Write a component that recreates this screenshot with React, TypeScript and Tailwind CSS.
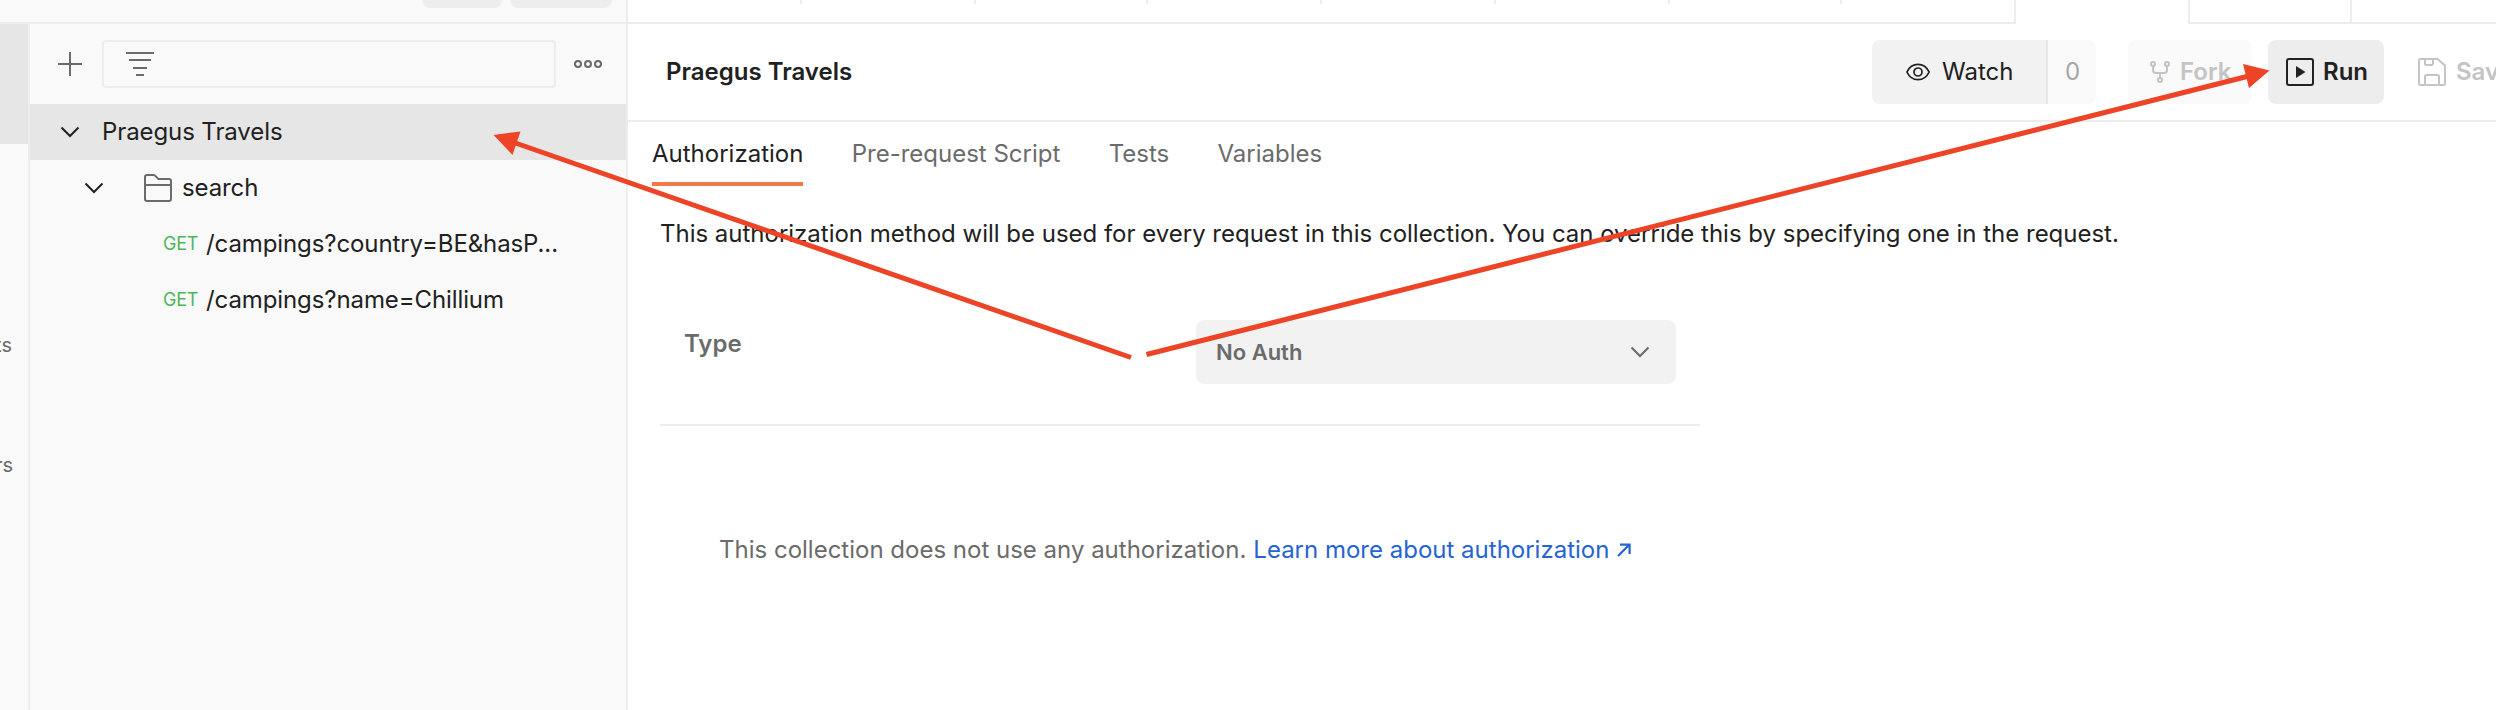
import React from "react";

function Chevron({ className = "" }: { className?: string }) {
  return (
    <svg width="20" height="12" viewBox="0 0 20 12" fill="none" stroke="currentColor" strokeWidth="2" className={`shrink-0 ${className}`}>
      <path d="M1.5 1.5 10 10l8.5-8.5" />
    </svg>
  );
}

function PlusIcon() {
  return (
    <svg width="24" height="24" viewBox="0 0 24 24" fill="none" stroke="#6b6b6b" strokeWidth="2" className="shrink-0">
      <path d="M12 0v24M0 12h24" />
    </svg>
  );
}

function FilterIcon() {
  return (
    <svg width="28" height="24" viewBox="0 0 28 24" fill="none" stroke="#6b6b6b" strokeWidth="2">
      <path d="M0 1h28M3 8h22M7 16h14M10 23h8" />
    </svg>
  );
}

function MoreIcon() {
  return (
    <svg width="28" height="8" viewBox="0 0 28 8" fill="none" stroke="#6b6b6b" strokeWidth="2" className="shrink-0">
      <circle cx="4" cy="4" r="3" />
      <circle cx="14" cy="4" r="3" />
      <circle cx="24" cy="4" r="3" />
    </svg>
  );
}

function FolderIcon() {
  return (
    <svg width="28" height="28" viewBox="0 0 28 28" fill="none" stroke="#6b6b6b" strokeWidth="2" className="shrink-0">
      <path d="M1 3a2 2 0 0 1 2-2h6.6a2 2 0 0 1 1.4.6L14.4 5H25a2 2 0 0 1 2 2v18a2 2 0 0 1-2 2H3a2 2 0 0 1-2-2ZM1 11h26" />
    </svg>
  );
}

function EyeIcon() {
  return (
    <svg width="24" height="18" viewBox="0 0 24 18" fill="none" stroke="#212121" strokeWidth="1.7" className="shrink-0">
      <path d="M.9 9C3.3 3.8 7.3 1.3 12 1.3S20.7 3.8 23.1 9C20.7 14.2 16.7 16.7 12 16.7S3.3 14.2.9 9Z" />
      <circle cx="12" cy="9" r="4" />
    </svg>
  );
}

function ForkIcon() {
  return (
    <svg width="20" height="22" viewBox="0 0 20 22" fill="none" stroke="#c4c4c4" strokeWidth="2" className="shrink-0">
      <circle cx="3" cy="3" r="2.1" />
      <circle cx="17" cy="3" r="2.1" />
      <circle cx="10" cy="19" r="2.1" />
      <path d="M3 5v4a3 3 0 0 0 3 3h8a3 3 0 0 0 3-3V5M10 12v5" />
    </svg>
  );
}

function RunIcon() {
  return (
    <svg width="28" height="28" viewBox="0 0 28 28" fill="none" className="shrink-0">
      <rect x="1" y="1" width="26" height="26" rx="2" stroke="#212121" strokeWidth="2" />
      <path d="M10 8v12l9.5-6Z" fill="#212121" />
    </svg>
  );
}

function SaveIcon() {
  return (
    <svg width="28" height="28" viewBox="0 0 28 28" fill="none" stroke="#c4c4c4" strokeWidth="2" className="shrink-0">
      <path d="M1 2.5A1.5 1.5 0 0 1 2.5 1H19.5L27 7.5v18a1.5 1.5 0 0 1-1.5 1.5h-23A1.5 1.5 0 0 1 1 25.5ZM7 1v4.5A1.500 1.500 0 0 0 8.5 7h5A1.5 1.5 0 0 0 15 5.5V1M7 27v-8.500A1.5 1.5 0 0 1 8.5 17h11a1.5 1.5 0 0 1 1.5 1.5V27" />
    </svg>
  );
}

function ExternalIcon() {
  return (
    <svg width="14" height="14" viewBox="0 0 14 14" fill="none" stroke="#2663d3" strokeWidth="2.2" className="shrink-0">
      <path d="M1 13 12 2M3 1.6h9.600v9.400" />
    </svg>
  );
}

function Sidebar() {
  return (
    <aside className="flex w-[628px] shrink-0 flex-col border-r-2 border-[#ededed] bg-[#f9f9f9]">
      <div className="flex h-6 justify-end gap-2 border-b-2 border-[#ededed] pr-3.5">
        <div className="h-2 w-20 rounded-b-lg bg-[#ededed]" />
        <div className="h-2 w-[102px] rounded-b-lg bg-[#ededed]" />
      </div>
      <div className="flex min-h-0 flex-1">
        <nav className="flex w-[30px] shrink-0 flex-col overflow-hidden border-r-2 border-[#ededed] text-[20px] leading-6 whitespace-nowrap text-[#6b6b6b]">
          <div className="h-[120px] bg-[#e6e6e6]" />
          <div className="mt-[189px] flex justify-end pr-4">Environments</div>
          <div className="mt-24 flex justify-end pr-[15px]">Mock Servers</div>
        </nav>
        <div className="flex min-w-0 flex-1 flex-col tracking-[-0.1px]">
          <div className="flex h-20 items-center pl-7">
            <PlusIcon />
            <div className="ml-5 flex h-12 w-[454px] items-center rounded border-2 border-[#ededed] pl-[22px]">
              <FilterIcon />
            </div>
            <div className="ml-[18px]">
              <MoreIcon />
            </div>
          </div>
          <div className="flex h-14 items-center bg-[#e6e6e6] pl-[30px]">
            <Chevron />
            <span className="ml-[22px]">Praegus Travels</span>
          </div>
          <div className="flex h-14 items-center pl-[54px]">
            <Chevron />
            <span className="ml-10 flex items-center gap-2.5">
              <FolderIcon />
              search
            </span>
          </div>
          <div className="flex h-14 items-center pl-[133px]">
            <span className="w-[43px] shrink-0 text-[18px] tracking-[-0.3px] text-[#4fb759]">GET</span>
            <span className="whitespace-nowrap">/campings?country=BE&amp;hasP...</span>
          </div>
          <div className="flex h-14 items-center pl-[133px]">
            <span className="w-[43px] shrink-0 text-[18px] tracking-[-0.3px] text-[#4fb759]">GET</span>
            <span className="whitespace-nowrap">/campings?name=Chillium</span>
          </div>
        </div>
      </div>
    </aside>
  );
}

function TabStrip() {
  return (
    <div className="flex h-6">
      <div className="flex w-[1388px] shrink-0 border-r-2 border-b-2 border-[#ededed]">
        <div className="h-1 w-[174px] border-r-2 border-[#ededed]" />
        <div className="h-1 w-[174px] border-r-2 border-[#ededed]" />
        <div className="h-1 w-[172px] border-r-2 border-[#ededed]" />
        <div className="h-1 w-[174px] border-r-2 border-[#ededed]" />
        <div className="h-1 w-[174px] border-r-2 border-[#ededed]" />
        <div className="h-1 w-[174px] border-r-2 border-[#ededed]" />
        <div className="h-1 w-[172px] border-r-2 border-[#ededed]" />
      </div>
      <div className="w-[172px] shrink-0" />
      <div className="w-[164px] shrink-0 border-x-2 border-b-2 border-[#ededed]" />
      <div className="flex-1 border-b-2 border-[#ededed]" />
    </div>
  );
}

function Header() {
  return (
    <header className="flex h-[98px] shrink-0 items-start justify-between overflow-hidden border-b-2 border-[#ededed] pt-4 pl-[38px]">
      <h1 className="flex h-16 items-center font-semibold">Praegus Travels</h1>
      <div className="flex w-[624px] shrink-0">
        <div className="flex h-16 w-[224px] shrink-0 overflow-hidden rounded-lg">
          <div className="flex w-44 items-center border-r-2 border-[#e6e6e6] bg-[#f2f2f2] pl-[34px]">
            <EyeIcon />
            <span className="ml-3">Watch</span>
          </div>
          <div className="flex flex-1 items-center justify-center bg-[#f9f9f9] pl-px text-[#a6a6a6]">0</div>
        </div>
        <div className="ml-8 flex h-16 w-[124px] shrink-0 items-center rounded-lg bg-[#fafafa] pl-[22px] font-semibold text-[#c4c4c4]">
          <ForkIcon />
          <span className="ml-2.5">Fork</span>
        </div>
        <div className="ml-4 flex h-16 w-[116px] shrink-0 items-center rounded-lg bg-[#ededed] pl-[18px] font-semibold">
          <RunIcon />
          <span className="ml-[9px]">Run</span>
        </div>
        <div className="ml-[34px] flex h-16 shrink-0 items-center font-semibold text-[#c4c4c4]">
          <SaveIcon />
          <span className="ml-2.5">Save</span>
        </div>
      </div>
    </header>
  );
}

function Tabs() {
  return (
    <div className="flex h-16 shrink-0 gap-[48.300px] pl-6 text-[#6b6b6b]">
      <div className="flex h-16 items-center border-b-4 border-[#f47748] pt-1 text-[#212121]">Authorization</div>
      <div className="flex h-[60px] items-center pt-1">Pre-request Script</div>
      <div className="flex h-[60px] items-center pt-1">Tests</div>
      <div className="flex h-[60px] items-center pt-1">Variables</div>
    </div>
  );
}

function Arrows() {
  return (
    <svg width="2496" height="710" viewBox="0 0 2496 710" fill="none" className="pointer-events-none absolute inset-0">
      <path d="M1131 357.5 514 142.5M1146.5 354.5 2249 76" stroke="#ed4326" strokeWidth="5" />
      <path d="M493.5 135 520.5 131.500 512.5 155ZM2269.5 70.5 2243 64 2249 88Z" fill="#ed4326" />
    </svg>
  );
}

export default function App() {
  return (
    <div className="relative flex h-[710px] w-[2496px] overflow-hidden bg-white font-[Inter,sans-serif] text-[24px] leading-8 text-[#212121]">
      <Sidebar />
      <main className="flex min-w-0 flex-1 flex-col">
        <TabStrip />
        <Header />
        <Tabs />
        <section className="flex flex-col pt-8 pl-8">
          <p className="tracking-[-0.012px] whitespace-nowrap">
            This authorization method will be used for every request in this collection. You can override this by specifying one in the request.
          </p>
          <div className="mt-[70px] flex h-[106px] w-[1040px] justify-between border-b-2 border-[#ededed] pr-6 pl-6 font-semibold text-[#6b6b6b]">
            <span className="mt-2">Type</span>
            <div className="flex h-16 w-[480px] items-center justify-between rounded-lg bg-[#f2f2f2] pr-[26px] pl-5 text-[22px]">
              No Auth
              <Chevron />
            </div>
          </div>
          <div className="mt-[108px] flex items-center pl-[59px] text-[#6b6b6b]">
            <span>This collection does not use any authorization.</span>
            <a className="ml-[7px] flex items-center gap-2 text-[#2663d3]">
              Learn more about authorization
              <ExternalIcon />
            </a>
          </div>
        </section>
      </main>
      <Arrows />
    </div>
  );
}
